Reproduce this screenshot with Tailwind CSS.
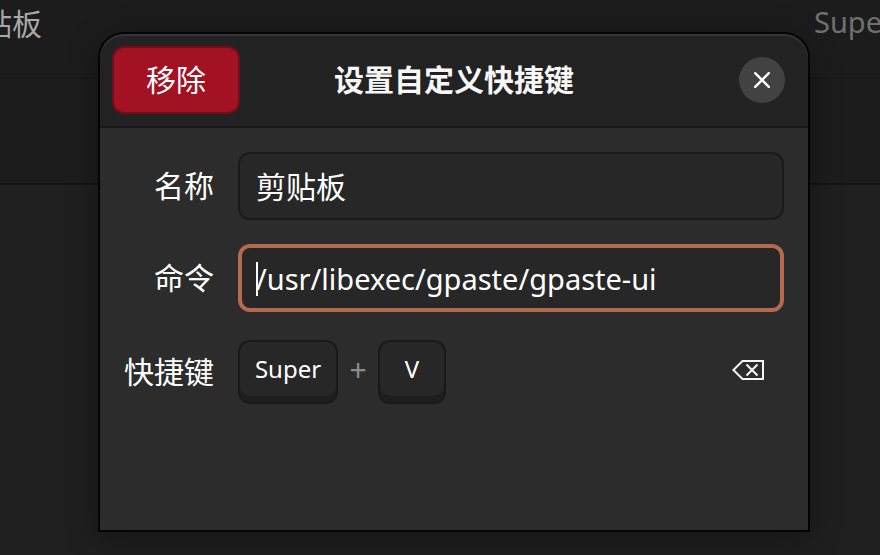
<!DOCTYPE html>
<html lang="zh-CN">
<head>
<meta charset="UTF-8"/>
<meta name="viewport" content="width=device-width, initial-scale=1.0"/>
<title>设置自定义快捷键</title>
<script src="https://cdn.jsdelivr.net/npm/@tailwindcss/browser@4"></script>
</head>
<body class="relative h-screen overflow-hidden bg-[#1f1f1f] font-['Noto_Sans','Noto_Sans_CJK_SC',sans-serif] text-white">

<!-- shortcut list behind the dialog -->
<ul class="-mt-[30px] border-b-2 border-[#141414] bg-[#1c1c1c] text-[30px] leading-10">
  <li class="flex h-[109px] items-center justify-between border-b-2 border-[#191919]">
    <span class="-ml-12 text-[#a8a8a8]">剪贴板</span>
    <span class="-mr-12 pb-1 text-[29px] text-[#707070]">Super+V</span>
  </li>
  <li class="h-[104px]"></li>
</ul>

<div class="absolute inset-0 pt-8 pr-[70px] pb-[23px] pl-[98px]">
  <div role="dialog" aria-labelledby="title" class="flex h-full flex-col overflow-hidden rounded-t-[26px] border-2 border-[#040404] bg-[#2c2c2c] shadow-[0_6px_30px_rgba(0,0,0,0.35)]">
    <header class="grid grid-cols-[1fr_auto_1fr] items-center rounded-t-3xl border-b-2 border-[#191919] bg-[#222222] p-3 shadow-[inset_0_2px_0_#343434]">
      <button class="h-[68px] w-32 rounded-xl border-2 border-[#6f0f1a] bg-[#a31222] text-[30px] leading-10">移除</button>
      <h1 id="title" class="text-[30px] leading-10 font-bold text-[#f7f7f7]">设置自定义快捷键</h1>
      <button aria-label="关闭" class="mr-[11px] flex size-[46px] items-center justify-center justify-self-end rounded-full bg-[#424242]">
        <svg class="size-4" viewBox="0 0 16 16" fill="none" stroke="white" stroke-width="2.4" stroke-linecap="round"><path d="M1.2 1.2l13.6 13.6M14.8 1.2L1.2 14.8"/></svg>
      </button>
    </header>

    <form class="grid grid-cols-[auto_1fr] items-center gap-6 p-6 text-[30px] leading-10">
      <label for="name" class="text-right">名称</label>
      <input id="name" type="text" value="剪贴板" class="h-[68px] w-full min-w-0 rounded-xl border-2 border-[#1a1a1a] bg-[#272727] px-4 pb-0.5 outline-none">

      <label for="command" class="text-right">命令</label>
      <div class="relative">
        <input id="command" type="text" value="/usr/libexec/gpaste/gpaste-ui" class="block h-[68px] w-full min-w-0 rounded-xl border-4 border-[#b5694f] bg-[#272727] px-3.5 text-[29px] caret-transparent outline-none">
        <span class="absolute top-[18px] left-[18px] h-[34px] w-0.5 bg-white"></span>
      </div>

      <span class="text-right">快捷键</span>
      <div class="flex h-[72px] items-center text-2xl">
        <kbd class="flex h-16 w-[100px] items-center justify-center rounded-xl border-2 border-[#191919] bg-[#272727] pb-1.5 font-['Noto_Sans',sans-serif] shadow-[inset_0_-6px_0_#1e1e1e]">Super</kbd>
        <span class="w-10 pb-1 text-center text-[30px] text-[#8c8c8c]">+</span>
        <kbd class="flex h-16 w-[68px] items-center justify-center rounded-xl border-2 border-[#191919] bg-[#272727] pb-1.5 font-['Noto_Sans',sans-serif] shadow-[inset_0_-6px_0_#1e1e1e]">V</kbd>
        <button type="button" aria-label="重置快捷键" class="mr-5 mb-1 ml-auto">
          <svg class="h-5 w-8" viewBox="0 0 32 20" fill="none" stroke="#f5f5f5" stroke-width="2"><path d="M10.5 1H31v18H10.5L1.4 10z"/><path d="M14.5 4.5l11 11M25.5 4.5l-11 11"/></svg>
        </button>
      </div>
    </form>
  </div>
</div>
</body>
</html>
